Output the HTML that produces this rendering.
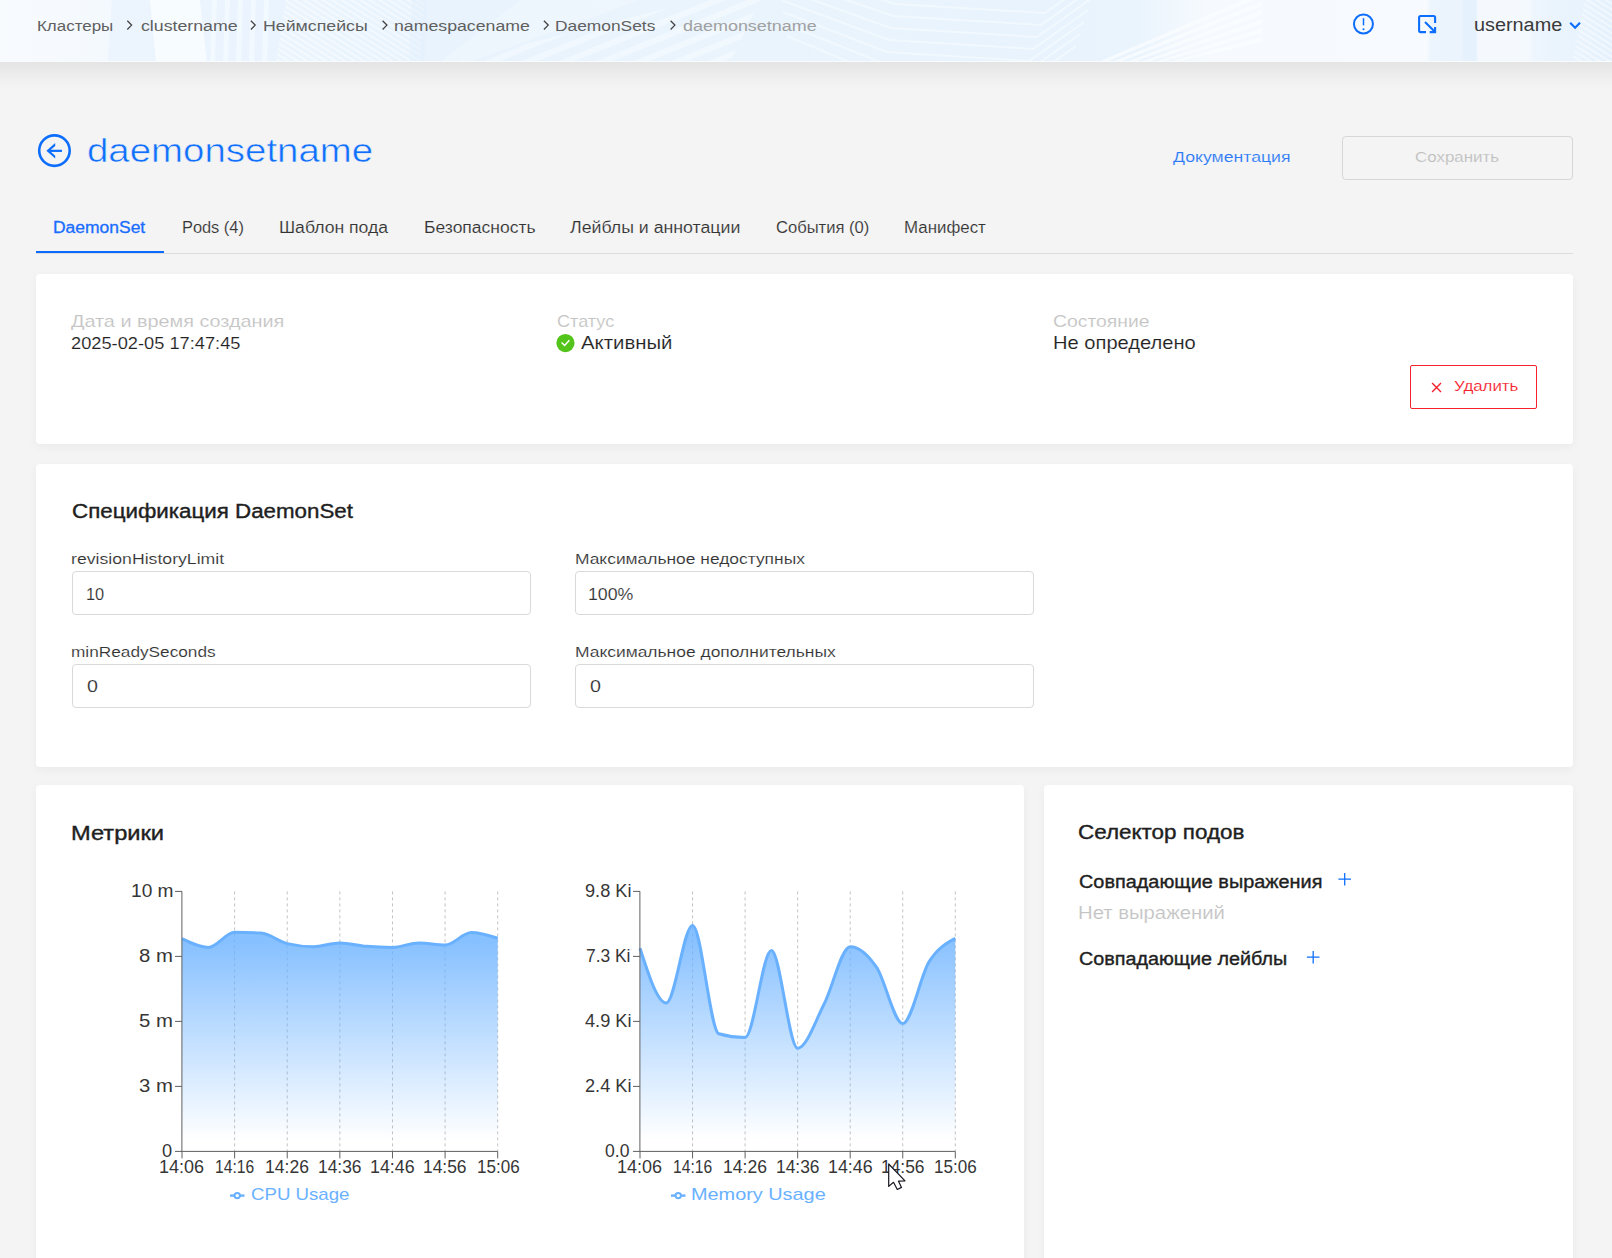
<!DOCTYPE html>
<html lang="ru"><head><meta charset="utf-8"><title>daemonsetname — DaemonSet</title>
<style>
*{box-sizing:border-box}
html,body{margin:0;padding:0}
body{width:1612px;height:1258px;overflow:hidden;position:relative;background:#f4f4f4;font-family:"Liberation Sans",sans-serif;color:#333}
.t{position:absolute;display:block;margin:0;padding:0;white-space:nowrap;line-height:1;font-weight:400;font-family:"Liberation Sans",sans-serif;text-decoration:none;transform-origin:0 0}
.ov{position:absolute;overflow:visible;pointer-events:none}
.med{-webkit-text-stroke:.3px currentColor}
.semi{-webkit-text-stroke:.38px currentColor}
.rw{-webkit-text-stroke:.13px #fff}
.rg{-webkit-text-stroke:.13px #f4f4f4}
.thin{-webkit-text-stroke:.55px #f4f4f4}
header{position:absolute;left:0;top:0;width:1612px;height:62px;background:#eef6fd;overflow:hidden}
.hshadow{position:absolute;left:0;top:62px;width:1612px;height:27px;background:linear-gradient(#e4e4e4,#eaeaea 35%,#f0f0f0 65%,#f4f4f4)}
.card{position:absolute;background:#fff;border-radius:4px;box-shadow:0 3px 10px rgba(0,0,0,.045)}
.inp{position:absolute;width:459px;height:44px;border:1px solid #d9d9d9;border-radius:4px;background:#fff}
.btn{position:absolute;height:44px;border-radius:4px}
.tabline{position:absolute;left:36px;top:253px;width:1537px;height:1px;background:#dcdcdc}
.tabink{position:absolute;left:36px;top:251px;width:128px;height:2px;background:#0a6cff}
</style></head><body>
<header>
<svg class="ov" style="left:0;top:0" width="1612" height="62" viewBox="0 0 1612 62">
<defs>
<linearGradient id="hg" x1="0" y1="0" x2="1612" y2="0" gradientUnits="userSpaceOnUse">
<stop offset="0" stop-color="#f8fbfe"/><stop offset=".03" stop-color="#f6fafe"/><stop offset=".09" stop-color="#f2f8fe"/>
<stop offset=".17" stop-color="#ecf5fd"/><stop offset=".25" stop-color="#e8f3fd"/><stop offset=".45" stop-color="#eaf4fd"/>
<stop offset=".66" stop-color="#e8f3fd"/><stop offset=".705" stop-color="#eaf4fd"/><stop offset=".75" stop-color="#f6fafe"/>
<stop offset=".885" stop-color="#f7fafe"/><stop offset=".888" stop-color="#ecf5fd"/><stop offset=".907" stop-color="#ebf4fd"/>
<stop offset=".908" stop-color="#e5f1fc"/><stop offset=".9155" stop-color="#e5f1fc"/><stop offset=".917" stop-color="#f5f9fe"/><stop offset=".948" stop-color="#f4f9fe"/>
<stop offset=".952" stop-color="#edf5fd"/><stop offset=".98" stop-color="#e8f3fd"/><stop offset="1" stop-color="#e4f1fc"/>
</linearGradient>
<pattern id="hatch" width="5" height="5" patternUnits="userSpaceOnUse" patternTransform="rotate(-58)"><rect width="5" height="5" fill="none"/><rect width="2" height="5" fill="#fff" opacity=".45"/></pattern>
<pattern id="hatch2" width="14" height="14" patternUnits="userSpaceOnUse" patternTransform="rotate(-22)"><rect width="14" height="6" fill="#fff" opacity=".35"/></pattern>
</defs>
<rect width="1612" height="62" fill="url(#hg)"/>
<polygon points="112,0 150,0 156,62 108,62" fill="#eaf3fd" opacity=".75"/>
<polygon points="150,0 200,0 207,62 156,62" fill="#f9fcff" opacity=".8"/>
<polygon points="200,0 286,0 276,62 207,62" fill="#e9f3fd" opacity=".7"/>
<polygon points="212,0 217,0 215,62 210,62" fill="#f6fbff" opacity=".6"/>
<polygon points="225,0 230,0 228,62 223,62" fill="#f6fbff" opacity=".6"/>
<polygon points="238,0 243,0 241,62 236,62" fill="#f6fbff" opacity=".6"/>
<polygon points="251,0 256,0 254,62 249,62" fill="#f6fbff" opacity=".6"/>
<polygon points="264,0 269,0 267,62 262,62" fill="#f6fbff" opacity=".6"/>
<polygon points="286,0 425,0 420,62 276,62" fill="url(#hatch)"/>
<polygon points="412,0 427,0 424,62 409,62" fill="#dfeefb" opacity=".35"/>
<polygon points="455,62 700,0 760,0 730,62" fill="url(#hatch2)"/>
<polygon points="520,0 640,0 470,62 440,62" fill="#f3f9fe" opacity=".5"/>
<polyline points="775,-36 895,4 1045,13 1100,-26" fill="none" stroke="#f4fafe" stroke-width="2" opacity=".8"/>
<polyline points="777,-24 893,16 1041,25 1096,-14" fill="none" stroke="#f4fafe" stroke-width="2" opacity=".8"/>
<polyline points="779,-12 891,28 1037,37 1092,-2" fill="none" stroke="#f4fafe" stroke-width="2" opacity=".8"/>
<polyline points="781,0 889,40 1033,49 1088,10" fill="none" stroke="#f4fafe" stroke-width="2" opacity=".8"/>
<polyline points="783,12 887,52 1029,61 1084,22" fill="none" stroke="#f4fafe" stroke-width="2" opacity=".8"/>
<polyline points="785,24 885,64 1025,73 1080,34" fill="none" stroke="#f4fafe" stroke-width="2" opacity=".8"/>
<polyline points="787,36 883,76 1021,85 1076,46" fill="none" stroke="#f4fafe" stroke-width="2" opacity=".8"/>
<polygon points="1098,62 1262,-8 1262,-3 1106,62" fill="#fbfdff" opacity=".7"/>
<polygon points="1112,62 1262,1 1262,6 1120,62" fill="#fbfdff" opacity=".7"/>
<polygon points="1126,62 1262,10 1262,15 1134,62" fill="#fbfdff" opacity=".7"/>
<polygon points="1140,62 1262,19 1262,24 1148,62" fill="#fbfdff" opacity=".7"/>
<polygon points="1154,62 1262,28 1262,33 1162,62" fill="#fbfdff" opacity=".7"/>
<polygon points="1168,62 1262,37 1262,42 1176,62" fill="#fbfdff" opacity=".7"/>
<polygon points="1585,0 1612,0 1612,62 1572,62" fill="url(#hatch)"/>
<rect y="61" width="1612" height="1" fill="#f9fcff"/>
</svg>
<nav>
<a href="#" class="t" style="left:36.71px;top:18px;font-size:15.5px;color:#606060;transform:scaleX(1.0931)">Кластеры</a>
<a href="#" class="t" style="left:140.70px;top:18px;font-size:15.5px;color:#606060;transform:scaleX(1.1443)">clustername</a>
<a href="#" class="t" style="left:262.95px;top:18px;font-size:15.5px;color:#606060;transform:scaleX(1.1451)">Неймспейсы</a>
<a href="#" class="t" style="left:393.86px;top:18px;font-size:15.5px;color:#606060;transform:scaleX(1.1425)">namespacename</a>
<a href="#" class="t" style="left:555.38px;top:18px;font-size:15.5px;color:#606060;transform:scaleX(1.1198)">DaemonSets</a>
<span class="t" style="left:683.00px;top:18px;font-size:15.5px;color:#a0a0a0;transform:scaleX(1.1581)">daemonsetname</span>
<span class="t" style="left:1473.60px;top:16px;font-size:18px;color:#3a3a3a;transform:scaleX(1.1021)">username</span>
</nav>
<svg class="ov" style="left:0px;top:0px" width="1612" height="1258" viewBox="0 0 1612 1258" fill="none">
<path d="M127.29999999999998,20.7 L131.6,25.1 L127.29999999999998,29.5" stroke="#444" stroke-width="1.3"/>
<path d="M250.9,20.7 L255.20000000000002,25.1 L250.9,29.5" stroke="#444" stroke-width="1.3"/>
<path d="M382.6,20.7 L386.9,25.1 L382.6,29.5" stroke="#444" stroke-width="1.3"/>
<path d="M543.9,20.7 L548.1999999999999,25.1 L543.9,29.5" stroke="#444" stroke-width="1.3"/>
<path d="M670.6,20.7 L674.9,25.1 L670.6,29.5" stroke="#444" stroke-width="1.3"/>
<circle cx="1363.45" cy="24" r="9.5" stroke="#0d6efd" stroke-width="2"/>
<path d="M1363.5,18.2 V25.4" stroke="#0d6efd" stroke-width="1.5"/>
<circle cx="1363.5" cy="29.3" r="1.05" fill="#0d6efd"/>
<path d="M1426,32.1 H1420.6 a1.5,1.5 0 0 1 -1.5,-1.5 V17.5 a1.5,1.5 0 0 1 1.5,-1.5 H1433.6 a1.5,1.5 0 0 1 1.5,1.5 V22.9" stroke="#0d6efd" stroke-width="2.1"/>
<path d="M1425,22.1 L1434.6,31.6 M1435.1,26.9 V32.1 H1429.7" stroke="#0d6efd" stroke-width="2.1"/>
<path d="M1570.2,22.8 L1575.1,27.8 L1580,22.8" stroke="#0d6efd" stroke-width="2.1"/>
</svg>
</header>
<div class="hshadow"></div>
<main>
<div class="titlebar">
<svg class="ov" style="left:0px;top:0px" width="1612" height="1258" viewBox="0 0 1612 1258" fill="none">
<circle cx="54.45" cy="150.6" r="15.25" stroke="#0d6efd" stroke-width="2.6"/>
<path d="M62,150.85 H48.5" stroke="#0d6efd" stroke-width="2.2"/>
<path d="M55.2,143.1 L46.4,150.85 L55.2,158.6 V155.7 L49.7,150.85 L55.2,146 Z" fill="#0d6efd"/>
</svg>
<h1 class="t thin" style="left:86.87px;top:133px;font-size:34px;color:#1070fd;transform:scaleX(1.1298)">daemonsetname</h1>
<a href="#" class="t rg" style="left:1172.50px;top:149px;font-size:15.5px;color:#2a79f7;transform:scaleX(1.1398)">Документация</a>
<span class="t rg" style="left:1415.30px;top:149px;font-size:15.5px;color:#bfbfbf;transform:scaleX(1.0916)">Сохранить</span>
<div class="btn" style="left:1342px;top:136px;width:231px;border:1px solid #d6d6d6"></div>
</div>
<nav class="tabs">
<div class="tabline"></div><div class="tabink"></div>
<a href="#" class="t med" style="left:53.41px;top:220px;font-size:16px;color:#1a6dff;transform:scaleX(1.0911)">DaemonSet</a>
<a href="#" class="t rg" style="left:181.98px;top:220px;font-size:16px;color:#333;transform:scaleX(1.0230)">Pods (4)</a>
<a href="#" class="t rg" style="left:278.90px;top:220px;font-size:16px;color:#333;transform:scaleX(1.0992)">Шаблон пода</a>
<a href="#" class="t rg" style="left:423.51px;top:220px;font-size:16px;color:#333;transform:scaleX(1.0931)">Безопасность</a>
<a href="#" class="t rg" style="left:570.10px;top:220px;font-size:16px;color:#333;transform:scaleX(1.1086)">Лейблы и аннотации</a>
<a href="#" class="t rg" style="left:775.90px;top:220px;font-size:16px;color:#333;transform:scaleX(1.0366)">События (0)</a>
<a href="#" class="t rg" style="left:904.34px;top:220px;font-size:16px;color:#333;transform:scaleX(1.0551)">Манифест</a>
</nav>
<section class="card" style="left:36px;top:274px;width:1537px;height:170px">
<div class="btn" style="left:1374px;top:91px;width:127px;border:1px solid #f5222d;border-radius:2px"></div>
<svg class="ov" style="left:-36px;top:-274px" width="1612" height="1258" viewBox="0 0 1612 1258" fill="none">
<circle cx="565.45" cy="343.05" r="9.1" fill="#52c41a"/>
<path d="M561.6,342.5 L564.6,345.5 L569.4,340.2" stroke="#fff" stroke-width="1.5"/>
<path d="M1432.1,383.1 L1441,392 M1441,383.1 L1432.1,392" stroke="#f5222d" stroke-width="1.4"/>
</svg>
<label class="t rw" style="left:35.30px;top:39px;font-size:17px;color:#c4c4c4;transform:scaleX(1.1659)">Дата и время создания</label>
<span class="t rw" style="left:35.30px;top:61px;font-size:17px;color:#222;transform:scaleX(1.0737)">2025-02-05 17:47:45</span>
<label class="t rw" style="left:521.10px;top:39px;font-size:17px;color:#c4c4c4;transform:scaleX(1.0638)">Статус</label>
<span class="t rw" style="left:545.30px;top:61px;font-size:17.5px;color:#222;transform:scaleX(1.1624)">Активный</span>
<label class="t rw" style="left:1017.00px;top:39px;font-size:17px;color:#c4c4c4;transform:scaleX(1.1378)">Состояние</label>
<span class="t rw" style="left:1016.85px;top:61px;font-size:17.5px;color:#222;transform:scaleX(1.1494)">Не определено</span>
<span class="t rw" style="left:1417.90px;top:104px;font-size:15.5px;color:#f5222d;transform:scaleX(1.0880)">Удалить</span>
</section>
<section class="card" style="left:36px;top:464px;width:1537px;height:303px">
<div class="inp" style="left:36px;top:107px"></div>
<div class="inp" style="left:539px;top:107px"></div>
<div class="inp" style="left:36px;top:200px"></div>
<div class="inp" style="left:539px;top:200px"></div>
<h2 class="t semi" style="left:35.70px;top:38px;font-size:19.5px;color:#1f1f1f;transform:scaleX(1.1453)">Спецификация DaemonSet</h2>
<label class="t rw" style="left:35.06px;top:87px;font-size:15.5px;color:#333;transform:scaleX(1.1398)">revisionHistoryLimit</label>
<label class="t rw" style="left:538.58px;top:87px;font-size:15.5px;color:#333;transform:scaleX(1.1229)">Максимальное недоступных</label>
<label class="t rw" style="left:35.09px;top:180px;font-size:15.5px;color:#333;transform:scaleX(1.1117)">minReadySeconds</label>
<label class="t rw" style="left:538.58px;top:180px;font-size:15.5px;color:#333;transform:scaleX(1.1246)">Максимальное дополнительных</label>
<span class="t rw" style="left:49.64px;top:122px;font-size:17px;color:#333;transform:scaleX(0.9625)">10</span>
<span class="t rw" style="left:552.26px;top:122px;font-size:17px;color:#333;transform:scaleX(1.0433)">100%</span>
<span class="t rw" style="left:51.00px;top:214px;font-size:17px;color:#333;transform:scaleX(1.1556)">0</span>
<span class="t rw" style="left:553.80px;top:214px;font-size:17px;color:#333;transform:scaleX(1.1556)">0</span>
</section>
<section class="card" style="left:36px;top:785px;width:988px;height:520px">
<svg class="ov" style="left:-36px;top:-785px" width="1612" height="1258" viewBox="0 0 1612 1258" fill="none">
<defs><linearGradient id="ag1" gradientUnits="userSpaceOnUse" x1="0" y1="931" x2="0" y2="1151.4"><stop offset=".05" stop-color="#69b1ff" stop-opacity=".8"/><stop offset=".95" stop-color="#69b1ff" stop-opacity="0"/></linearGradient><linearGradient id="ag2" gradientUnits="userSpaceOnUse" x1="0" y1="925" x2="0" y2="1151.4"><stop offset=".05" stop-color="#69b1ff" stop-opacity=".8"/><stop offset=".95" stop-color="#69b1ff" stop-opacity="0"/></linearGradient></defs>
<line x1="234.62" y1="891.4" x2="234.62" y2="1151.4" stroke="#c2c2c2" stroke-dasharray="3 3"/>
<line x1="287.23" y1="891.4" x2="287.23" y2="1151.4" stroke="#c2c2c2" stroke-dasharray="3 3"/>
<line x1="339.85" y1="891.4" x2="339.85" y2="1151.4" stroke="#c2c2c2" stroke-dasharray="3 3"/>
<line x1="392.47" y1="891.4" x2="392.47" y2="1151.4" stroke="#c2c2c2" stroke-dasharray="3 3"/>
<line x1="445.08" y1="891.4" x2="445.08" y2="1151.4" stroke="#c2c2c2" stroke-dasharray="3 3"/>
<line x1="497.70" y1="891.4" x2="497.70" y2="1151.4" stroke="#c2c2c2" stroke-dasharray="3 3"/>
<path d="M182.00,938.70C190.77,943.05 199.54,947.40 208.31,947.40C217.08,947.40 225.85,932.20 234.62,932.20C243.39,932.20 252.16,932.47 260.93,933.00C269.69,933.53 278.46,941.53 287.23,943.60C296.00,945.67 304.77,946.70 313.54,946.70C322.31,946.70 331.08,942.90 339.85,942.90C348.62,942.90 357.39,945.57 366.16,946.30C374.93,947.03 383.70,947.40 392.47,947.40C401.24,947.40 410.01,942.90 418.77,942.90C427.54,942.90 436.31,945.10 445.08,945.10C453.85,945.10 462.62,932.60 471.39,932.60C480.16,932.60 488.93,935.45 497.70,938.30L497.70,1151.4L182.00,1151.4Z" fill="url(#ag1)"/>
<path d="M182.00,938.70C190.77,943.05 199.54,947.40 208.31,947.40C217.08,947.40 225.85,932.20 234.62,932.20C243.39,932.20 252.16,932.47 260.93,933.00C269.69,933.53 278.46,941.53 287.23,943.60C296.00,945.67 304.77,946.70 313.54,946.70C322.31,946.70 331.08,942.90 339.85,942.90C348.62,942.90 357.39,945.57 366.16,946.30C374.93,947.03 383.70,947.40 392.47,947.40C401.24,947.40 410.01,942.90 418.77,942.90C427.54,942.90 436.31,945.10 445.08,945.10C453.85,945.10 462.62,932.60 471.39,932.60C480.16,932.60 488.93,935.45 497.70,938.30" stroke="#69b1ff" stroke-width="3" stroke-linejoin="round"/>
<path d="M181.9,891.4V1151.4M182,1151.4H497.7M175,891.4H182M175,956.4H182M175,1021.4H182M175,1086.4H182M175,1151.4H182M182.00,1151.4V1158.4M234.62,1151.4V1158.4M287.23,1151.4V1158.4M339.85,1151.4V1158.4M392.47,1151.4V1158.4M445.08,1151.4V1158.4M497.70,1151.4V1158.4" stroke="#606060"/>
<path d="M230,1195.6H244.5" stroke="#69b1ff" stroke-width="2.4"/>
<circle cx="237.25" cy="1195.6" r="2.7" fill="#fff" stroke="#69b1ff" stroke-width="2"/>
<line x1="692.55" y1="891.4" x2="692.55" y2="1151.4" stroke="#c2c2c2" stroke-dasharray="3 3"/>
<line x1="745.10" y1="891.4" x2="745.10" y2="1151.4" stroke="#c2c2c2" stroke-dasharray="3 3"/>
<line x1="797.65" y1="891.4" x2="797.65" y2="1151.4" stroke="#c2c2c2" stroke-dasharray="3 3"/>
<line x1="850.20" y1="891.4" x2="850.20" y2="1151.4" stroke="#c2c2c2" stroke-dasharray="3 3"/>
<line x1="902.75" y1="891.4" x2="902.75" y2="1151.4" stroke="#c2c2c2" stroke-dasharray="3 3"/>
<line x1="955.30" y1="891.4" x2="955.30" y2="1151.4" stroke="#c2c2c2" stroke-dasharray="3 3"/>
<path d="M640.00,948.30C648.76,975.60 657.52,1002.90 666.27,1002.90C675.03,1002.90 683.79,925.40 692.55,925.40C701.31,925.40 710.07,1031.17 718.83,1033.70C727.58,1036.23 736.34,1037.50 745.10,1037.50C753.86,1037.50 762.62,950.50 771.38,950.50C780.13,950.50 788.89,1048.20 797.65,1048.20C806.41,1048.20 815.17,1021.42 823.92,1004.50C832.68,987.58 841.44,946.70 850.20,946.70C858.96,946.70 867.72,954.40 876.47,967.20C885.23,980.00 893.99,1023.50 902.75,1023.50C911.51,1023.50 920.27,976.08 929.02,961.90C937.78,947.72 946.54,943.06 955.30,938.40L955.30,1151.4L640.00,1151.4Z" fill="url(#ag2)"/>
<path d="M640.00,948.30C648.76,975.60 657.52,1002.90 666.27,1002.90C675.03,1002.90 683.79,925.40 692.55,925.40C701.31,925.40 710.07,1031.17 718.83,1033.70C727.58,1036.23 736.34,1037.50 745.10,1037.50C753.86,1037.50 762.62,950.50 771.38,950.50C780.13,950.50 788.89,1048.20 797.65,1048.20C806.41,1048.20 815.17,1021.42 823.92,1004.50C832.68,987.58 841.44,946.70 850.20,946.70C858.96,946.70 867.72,954.40 876.47,967.20C885.23,980.00 893.99,1023.50 902.75,1023.50C911.51,1023.50 920.27,976.08 929.02,961.90C937.78,947.72 946.54,943.06 955.30,938.40" stroke="#69b1ff" stroke-width="3" stroke-linejoin="round"/>
<path d="M639.9,891.4V1151.4M640,1151.4H955.3M633,891.4H640M633,956.4H640M633,1021.4H640M633,1086.4H640M633,1151.4H640M640.00,1151.4V1158.4M692.55,1151.4V1158.4M745.10,1151.4V1158.4M797.65,1151.4V1158.4M850.20,1151.4V1158.4M902.75,1151.4V1158.4M955.30,1151.4V1158.4" stroke="#606060"/>
<path d="M671,1195.6H685.5" stroke="#69b1ff" stroke-width="2.4"/>
<circle cx="678.25" cy="1195.6" r="2.7" fill="#fff" stroke="#69b1ff" stroke-width="2"/>
</svg>
<h2 class="t semi" style="left:35.32px;top:38px;font-size:20px;color:#1f1f1f;transform:scaleX(1.1823)">Метрики</h2>
<span class="t" style="left:94.71px;top:98px;font-size:17.5px;color:#363636;transform:scaleX(1.0930)">10 m</span>
<span class="t" style="left:103.40px;top:163px;font-size:17.5px;color:#363636;transform:scaleX(1.1611)">8 m</span>
<span class="t" style="left:103.40px;top:228px;font-size:17.5px;color:#363636;transform:scaleX(1.1611)">5 m</span>
<span class="t" style="left:103.40px;top:293px;font-size:17.5px;color:#363636;transform:scaleX(1.1611)">3 m</span>
<span class="t" style="left:126.20px;top:358px;font-size:17.5px;color:#363636;transform:scaleX(1.0400)">0</span>
<span class="t" style="left:548.50px;top:98px;font-size:17.5px;color:#363636;transform:scaleX(1.0373)">9.8 Ki</span>
<span class="t" style="left:550.40px;top:163px;font-size:17.5px;color:#363636;transform:scaleX(0.9940)">7.3 Ki</span>
<span class="t" style="left:548.50px;top:228px;font-size:17.5px;color:#363636;transform:scaleX(1.0373)">4.9 Ki</span>
<span class="t" style="left:548.50px;top:293px;font-size:17.5px;color:#363636;transform:scaleX(1.0373)">2.4 Ki</span>
<span class="t" style="left:569.30px;top:358px;font-size:17.5px;color:#363636;transform:scaleX(1.0043)">0.0</span>
<span class="t" style="left:123.37px;top:374px;font-size:17.5px;color:#363636;transform:scaleX(1.0271)">14:06</span>
<span class="t" style="left:179.22px;top:374px;font-size:17.5px;color:#363636;transform:scaleX(0.8940)">14:16</span>
<span class="t" style="left:229.43px;top:374px;font-size:17.5px;color:#363636;transform:scaleX(1.0033)">14:26</span>
<span class="t" style="left:282.26px;top:374px;font-size:17.5px;color:#363636;transform:scaleX(0.9938)">14:36</span>
<span class="t" style="left:334.35px;top:374px;font-size:17.5px;color:#363636;transform:scaleX(1.0176)">14:46</span>
<span class="t" style="left:387.49px;top:374px;font-size:17.5px;color:#363636;transform:scaleX(0.9938)">14:56</span>
<span class="t" style="left:440.53px;top:374px;font-size:17.5px;color:#363636;transform:scaleX(0.9748)">15:06</span>
<span class="t" style="left:581.37px;top:374px;font-size:17.5px;color:#363636;transform:scaleX(1.0271)">14:06</span>
<span class="t" style="left:637.16px;top:374px;font-size:17.5px;color:#363636;transform:scaleX(0.8940)">14:16</span>
<span class="t" style="left:687.30px;top:374px;font-size:17.5px;color:#363636;transform:scaleX(1.0033)">14:26</span>
<span class="t" style="left:740.06px;top:374px;font-size:17.5px;color:#363636;transform:scaleX(0.9938)">14:36</span>
<span class="t" style="left:792.08px;top:374px;font-size:17.5px;color:#363636;transform:scaleX(1.0176)">14:46</span>
<span class="t" style="left:845.16px;top:374px;font-size:17.5px;color:#363636;transform:scaleX(0.9938)">14:56</span>
<span class="t" style="left:898.13px;top:374px;font-size:17.5px;color:#363636;transform:scaleX(0.9748)">15:06</span>
<span class="t" style="left:215.00px;top:401px;font-size:17px;color:#69b1ff;transform:scaleX(1.0974)">CPU Usage</span>
<span class="t" style="left:654.83px;top:401px;font-size:17px;color:#69b1ff;transform:scaleX(1.1687)">Memory Usage</span>
<svg class="ov" style="left:-36px;top:-785px" width="1612" height="1258" viewBox="0 0 1612 1258" fill="none">
<path d="M888.7,1164 L888.7,1186.4 L893.5,1182.3 L897.3,1189.5 L901.5,1187.4 L898.5,1181.2 L905,1180.9 Z" fill="#fff" stroke="#15151f" stroke-width="1.2" stroke-linejoin="round"/>
</svg>
</section>
<section class="card" style="left:1044px;top:785px;width:529px;height:520px">
<svg class="ov" style="left:-1044px;top:-785px" width="1612" height="1258" viewBox="0 0 1612 1258" fill="none">
<path d="M1338.4,879.2 H1351.0 M1344.7,872.9000000000001 V885.5" stroke="#0d6efd" stroke-width="1.3"/>
<path d="M1306.9,957.2 H1319.5 M1313.2,950.9000000000001 V963.5" stroke="#0d6efd" stroke-width="1.3"/>
</svg>
<h2 class="t semi" style="left:33.98px;top:37px;font-size:20px;color:#1f1f1f;transform:scaleX(1.1219)">Селектор подов</h2>
<h3 class="t semi" style="left:35.10px;top:88px;font-size:18px;color:#1f1f1f;transform:scaleX(1.1038)">Совпадающие выражения</h3>
<span class="t rw" style="left:33.94px;top:120px;font-size:17.5px;color:#c4c4c4;transform:scaleX(1.1595)">Нет выражений</span>
<h3 class="t semi" style="left:35.10px;top:165px;font-size:18px;color:#1f1f1f;transform:scaleX(1.0975)">Совпадающие лейблы</h3>
</section>
</main>
</body></html>
